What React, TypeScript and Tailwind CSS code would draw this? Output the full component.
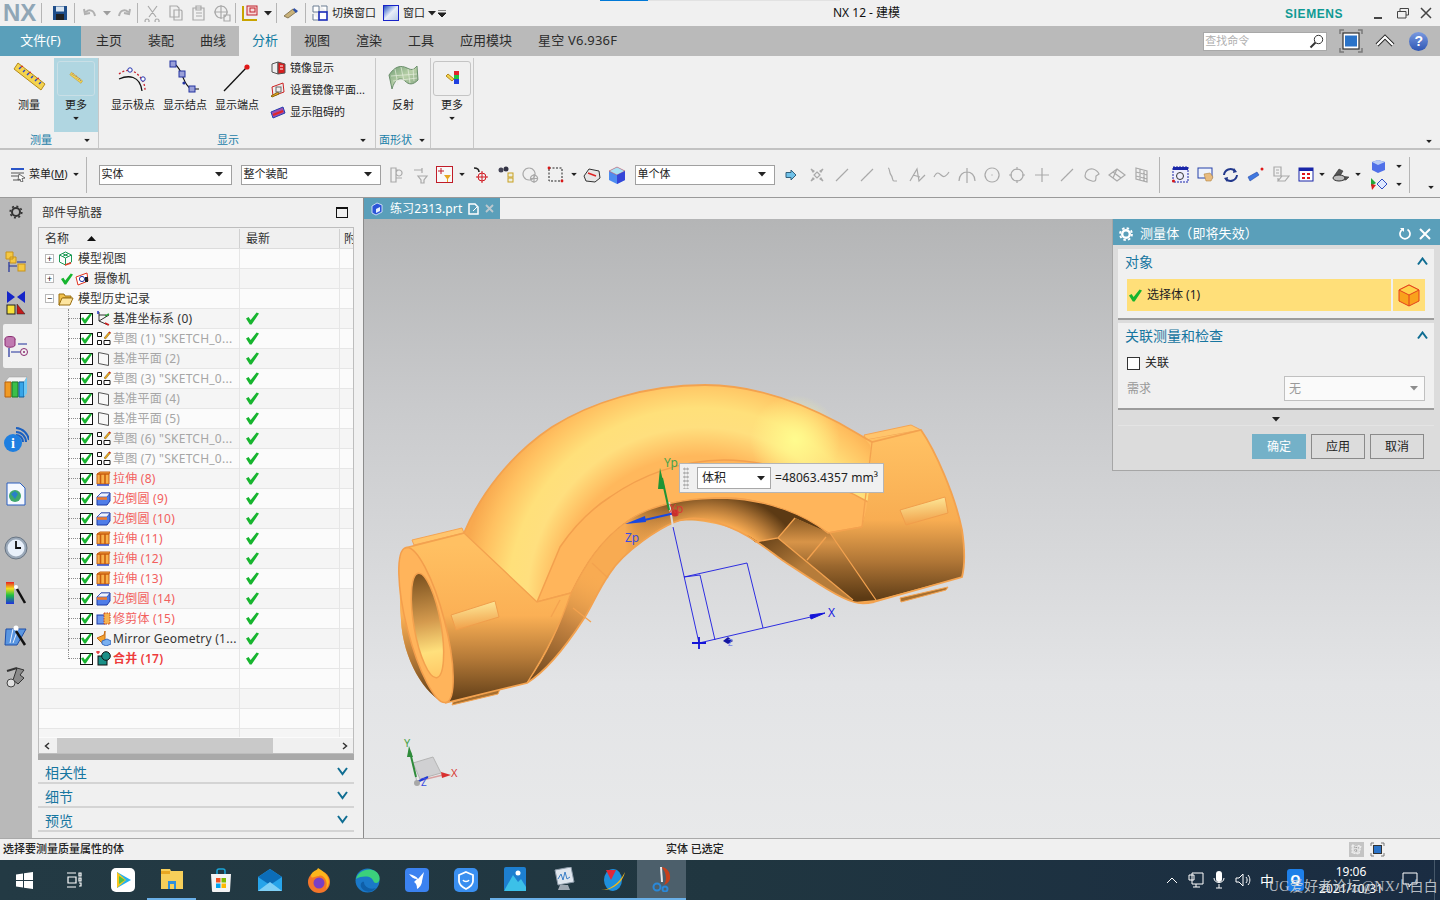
import type { ReactNode } from "react";

const font = "[font-family:'Noto_Sans','Noto_Sans_CJK_SC',sans-serif]";

function Caret({ className = "" }: { className?: string }) {
  return (
    <svg width="8" height="5" viewBox="0 0 8 5" className={className}>
      <path d="M0 0h8L4 4.5z" fill="#222" />
    </svg>
  );
}

function Check({ size = 13 }: { size?: number }) {
  return (
    <svg width={size} height={size} viewBox="0 0 13 13">
      <path d="M0 6.5l2.6-1.4 2 3L10.6.5 13 1.6 5.6 12.5H3.8z" fill="#17b52f" />
    </svg>
  );
}

function Svg({ w = 16, h = 16, children }: { w?: number; h?: number; children: ReactNode }) {
  return (
    <svg width={w} height={h} viewBox={`0 0 ${w} ${h}`} className="shrink-0">
      {children}
    </svg>
  );
}

function Grey({ d }: { d: string }) {
  return (
    <Svg w={18} h={18}>
      <path d={d} fill="none" stroke="#a9a9a9" strokeWidth="1.2" />
    </Svg>
  );
}

const Sep = ({ h = "h-[20px]", m = "mx-[4px]" }: { h?: string; m?: string }) => (
  <div className={`${h} ${m} w-px shrink-0 bg-[#b5b5b5]`} />
);

function TitleBar() {
  return (
    <div className="relative flex h-[26px] shrink-0 items-center bg-[#f0f0f0] pl-[3px]">
      <div className="absolute left-[600px] top-0 h-px w-[48px] bg-[#0078d7]" />
      <div className="absolute left-[648px] top-0 h-px w-[192px] bg-[#e2e2e2]" />
      <span className="w-[34px] text-[24px] font-bold leading-none text-[#8fa6b6] [font-family:'Liberation_Sans',sans-serif]">NX</span>
      <Sep m="ml-[4px] mr-[10px]" />
      <Svg>
        <rect x="1" y="1" width="14" height="14" fill="#1f4e8a" />
        <rect x="4" y="1.5" width="8" height="5" fill="#d8e4f0" />
        <rect x="4" y="9" width="8" height="6" fill="#222" />
      </Svg>
      <Sep m="ml-[6px] mr-[8px]" />
      <div className="flex items-center gap-[6px]">
        <Svg w={14} h={14}>
          <path d="M3 6c3-3 8-2 9 4M1 3l1 5 5-1" fill="none" stroke="#b0b0b0" strokeWidth="2" />
        </Svg>
        <Caret className="opacity-40" />
        <Svg w={14} h={14}>
          <path d="M11 6c-3-3-8-2-9 4M13 3l-1 5-5-1" fill="none" stroke="#b0b0b0" strokeWidth="2" />
        </Svg>
      </div>
      <Sep m="ml-[6px] mr-[6px]" />
      <div className="flex items-center gap-[5px]">
        <Grey d="M4 2l8 11M13 2L5 13M3 15a2 2 0 1 0 .1 0M13 15a2 2 0 1 0 .1 0" />
        <Grey d="M3 2h7l2 2v9H3zM7 6h7l1 1v9H7z" />
        <Grey d="M3 4h11v12H3zM6 2h5v4H6zM6 9h6M6 12h6" />
        <Grey d="M8 2a6 6 0 1 0 .1 0M1 8h14M8 1v14M11 11h6v6h-6z" />
      </div>
      <Sep m="ml-[4px] mr-[6px]" />
      <Svg>
        <path d="M1 1v14h14" fill="none" stroke="#c9a400" strokeWidth="2" />
        <rect x="5" y="1" width="10" height="9" fill="#f7d9d9" stroke="#c0202a" />
        <rect x="8" y="3" width="5" height="4" fill="none" stroke="#c0202a" />
      </Svg>
      <Caret className="ml-[6px]" />
      <Sep m="ml-[4px] mr-[6px]" />
      <Svg>
        <path d="M1 11l9-7 3 3-8 6z" fill="#c9b27a" stroke="#8a7a55" />
        <path d="M11 3l4 3-2 2-3-3z" fill="#2d4fa8" />
      </Svg>
      <Sep m="ml-[6px] mr-[6px]" />
      <Svg>
        <path d="M1 1h6v6H1zM9 1h6v6M1 9v6h6" fill="#fff" stroke="#6b7d92" />
        <rect x="7" y="7" width="8" height="8" fill="#fff" stroke="#1a2bb8" strokeWidth="1.6" />
      </Svg>
      <span className="ml-[4px] w-[44px] whitespace-nowrap">切换窗口</span>
      <div className="ml-[7px] h-[16px] w-[16px] shrink-0 border-[1.5px] border-[#1722c8] bg-gradient-to-br from-[#2a4fc0] via-[#e8eef8] to-[#b9cbe6]" />
      <span className="ml-[4px] w-[22px] whitespace-nowrap">窗口</span>
      <Caret className="ml-[3px]" />
      <svg width="8" height="7" viewBox="0 0 8 7" className="ml-[2px]">
        <path d="M0 0h8M0 3h8L4 7z" stroke="#222" fill="#222" />
      </svg>
      <span className="ml-[387px] w-[74px] whitespace-nowrap text-[12px] text-[#111]">NX 12 - 建模</span>
      <span className="ml-[378px] mt-[2px] w-[62px] text-[12px] font-bold tracking-[0.6px] text-[#0f9a94] [font-family:'Liberation_Sans',sans-serif]">
        SIEMENS
      </span>
      <div className="ml-[27px] flex items-center">
        <div className="mt-[10px] h-[2px] w-[8px] bg-[#444]" />
        <svg width="12" height="11" viewBox="0 0 12 11" className="ml-[15px]">
          <path d="M3 3V.5h8.5V7H9M.5 3.5H9V10H.5z" fill="none" stroke="#444" />
        </svg>
        <svg width="12" height="12" viewBox="0 0 12 12" className="ml-[11px]">
          <path d="M1 1l10 10M11 1L1 11" stroke="#444" strokeWidth="1.5" />
        </svg>
      </div>
    </div>
  );
}

const tabs = ["主页", "装配", "曲线", "分析", "视图", "渲染", "工具"];

function TabBar() {
  return (
    <div className="flex h-[30px] shrink-0 items-center bg-[#bababa] text-[13px] text-[#2c2c2c]">
      <div className="flex h-full w-[81px] items-center justify-center bg-[#5a9fba] text-white">文件(F)</div>
      <div className="ml-[2px] flex h-full">
        {tabs.map((t) =>
          t === "分析" ? (
            <div key={t} className="flex h-full w-[52px] items-center justify-center bg-[#f0f0f0] text-[#0f7ba1]">
              {t}
            </div>
          ) : (
            <div key={t} className="flex h-full w-[52px] items-center justify-center">
              {t}
            </div>
          ),
        )}
      </div>
      <span className="ml-[13px]">应用模块</span>
      <span className="ml-[26px] whitespace-nowrap tracking-[0.2px]">星空 V6.936F</span>
      <div className="ml-[586px] flex h-[19px] w-[124px] items-center justify-between border border-[#a8a8a8] bg-white pl-[1px] pr-[2px] text-[11px] text-[#b0b0b0]">
        查找命令
        <svg width="15" height="15" viewBox="0 0 15 15">
          <circle cx="9.5" cy="5.5" r="4.2" fill="#fff" stroke="#333" />
          <path d="M6.5 8.5L1.5 13.5" stroke="#333" strokeWidth="2" />
        </svg>
      </div>
      <svg width="24" height="24" viewBox="0 0 24 24" className="ml-[12px]">
        <path d="M1 5V1h4M19 1h4v4M23 19v4h-4M5 23H1v-4" fill="none" stroke="#7a7a7a" strokeWidth="1.5" />
        <rect x="4" y="4" width="16" height="16" fill="#fff" stroke="#333" strokeWidth="1.2" />
        <rect x="6" y="6.5" width="12" height="11" fill="#2a73c8" />
      </svg>
      <svg width="20" height="14" viewBox="0 0 20 14" className="ml-[12px]">
        <path d="M2 11l8-8 8 8" fill="none" stroke="#222" strokeWidth="4" />
        <path d="M2 11l8-8 8 8" fill="none" stroke="#fff" strokeWidth="2.2" />
      </svg>
      <div className="ml-[14px] flex h-[19px] w-[19px] items-center justify-center rounded-full bg-gradient-to-b from-[#7a9ae0] to-[#2f56b4] text-[14px] font-bold text-white [font-family:'Liberation_Sans',sans-serif]">
        ?
      </div>
    </div>
  );
}

function RibbonButton({ icon, label, className = "", caret = false }: { icon: ReactNode; label: string; className?: string; caret?: boolean }) {
  return (
    <div className={`flex h-[74px] flex-col items-center ${className}`}>
      <div className="flex h-[38px] w-full items-center justify-center">{icon}</div>
      <span className="mt-[2px] leading-[14px] whitespace-nowrap">{label}</span>
      {caret && <Caret className="mt-[4px] scale-75" />}
    </div>
  );
}

function GroupLabel({ label, className }: { label: string; className: string }) {
  return <div className={`flex h-[16px] items-center text-[#1c80a8] ${className}`}>{label}</div>;
}

const Ruler = ({ s = 34 }: { s?: number }) => (
  <svg width={s} height={s} viewBox="0 0 34 34">
    <path d="M6 3L33 24l-4 6L2 9z" fill="#f4d34e" stroke="#b58a1c" />
    <path d="M7 9l2-2M11 12l2-2M15 15l2-2M19 18l2-2M23 21l2-2M27 24l2-2" stroke="#2b46c8" strokeWidth="1.4" />
    <path d="M9 7l2-1M17 13l2-1M25 19l2-1" stroke="#d22" strokeWidth="1.2" />
  </svg>
);

function Ribbon() {
  return (
    <div className="flex h-[94px] shrink-0 border-b-2 border-[#c2c2c2] bg-[#f0f0f0] pt-[2px]">
      <div className="flex h-[90px] w-[99px] shrink-0 flex-col border-r border-[#c8c8c8]">
        <div className="flex">
          <RibbonButton className="w-[54px] pl-[4px]" label="测量" icon={<Ruler />} />
          <div className="w-[44px] bg-[#b0d6e1]">
            <RibbonButton
              caret
              label="更多"
              icon={
                <div className="mt-[2px] flex h-[35px] w-[38px] items-center justify-center rounded-[3px] border border-[#c9dfe6]">
                  <Ruler s={14} />
                </div>
              }
            />
          </div>
        </div>
        <div className="flex items-center">
          <GroupLabel label="测量" className="pl-[30px]" />
          <Caret className="ml-[31px] scale-75" />
        </div>
      </div>
      <div className="flex w-[277px] shrink-0 flex-col border-r border-[#c8c8c8]">
        <div className="flex h-[74px] pl-[8px]">
          <RibbonButton
            className="w-[52px]"
            label="显示极点"
            icon={
              <svg width="32" height="30" viewBox="0 0 32 30">
                <path d="M2 12C7 8 14 7 19 11s9 10 9 17" fill="none" stroke="#c8202a" strokeWidth="1.3" strokeDasharray="2 2" />
                <path d="M2 17c9-4 21-4 23 12" fill="none" stroke="#111" strokeWidth="1.3" />
                <circle cx="13" cy="8" r="2.2" fill="#fff" stroke="#2233b0" />
                <circle cx="26" cy="17" r="2.2" fill="#fff" stroke="#2233b0" />
              </svg>
            }
          />
          <RibbonButton
            className="w-[52px]"
            label="显示结点"
            icon={
              <svg width="32" height="34" viewBox="0 0 32 34">
                <path d="M4 3c6 3 7 8 9 12s3 10 9 14h8" fill="none" stroke="#111" strokeWidth="1.2" />
                <rect x="1" y="1" width="6" height="6" fill="#9aa0d8" stroke="#2233a0" />
                <rect x="10" y="11" width="6" height="6" fill="#9aa0d8" stroke="#2233a0" />
                <rect x="20" y="26" width="6" height="6" fill="#9aa0d8" stroke="#2233a0" />
                <circle cx="15" cy="23" r="1.6" fill="#2233a0" />
              </svg>
            }
          />
          <RibbonButton
            className="w-[52px]"
            label="显示端点"
            icon={
              <svg width="28" height="30" viewBox="0 0 28 30">
                <path d="M1 29L24 5" stroke="#111" strokeWidth="1.3" />
                <circle cx="24" cy="5" r="2.6" fill="#e01818" />
              </svg>
            }
          />
          <div className="ml-[7px] -mt-[1px] flex flex-col">
            <div className="flex h-[22px] items-center gap-[4px]">
              <svg width="16" height="16" viewBox="0 0 16 16">
                <path d="M2 4l6-2v12l-6-2z" fill="#eee" stroke="#555" />
                <path d="M8 2l7 2v9l-7 1z" fill="#d81e1e" stroke="#555" />
                <path d="M10 6h3M10 9h3" stroke="#fff" />
              </svg>
              镜像显示
            </div>
            <div className="flex h-[22px] items-center gap-[4px] whitespace-nowrap">
              <svg width="16" height="16" viewBox="0 0 16 16">
                <path d="M2 5l11-4 1 9-11 4z" fill="#eee" stroke="#c22" />
                <path d="M1 14l7-4 1 2-7 3z" fill="#e8a820" stroke="#8a6a10" />
                <rect x="6" y="5" width="5" height="5" fill="none" stroke="#666" />
              </svg>
              设置镜像平面...
            </div>
            <div className="flex h-[22px] items-center gap-[4px]">
              <svg width="16" height="16" viewBox="0 0 16 16">
                <path d="M1 8l12-5 2 6-12 5z" fill="#9a4fb0" stroke="#2540b0" />
                <path d="M3 11l10-4" stroke="#e02828" strokeWidth="2" />
              </svg>
              显示阻碍的
            </div>
          </div>
        </div>
        <div className="flex h-[16px] items-center">
          <span className="ml-[118px] text-[#1c80a8]">显示</span>
          <Caret className="ml-[120px] scale-75" />
        </div>
      </div>
      <div className="flex w-[55px] shrink-0 flex-col border-r border-[#c8c8c8]">
        <RibbonButton
          label="反射"
          icon={
            <svg width="32" height="26" viewBox="0 0 32 26">
              <defs>
                <linearGradient id="refl" x1="0" y1="0" x2="1" y2="1">
                  <stop offset="0" stopColor="#6f9c74" />
                  <stop offset=".5" stopColor="#b8d0a8" />
                  <stop offset="1" stopColor="#7ea07c" />
                </linearGradient>
              </defs>
              <path d="M2 11C8 2 14 1 20 4s7 1 10-2l1 14c-5 5-9 5-13 1s-10-3-13 8z" fill="url(#refl)" stroke="#6b8f6c" />
              <path d="M8 5l3 16M14 3l3 14M21 5l2 14M26 4l1 13M4 12l26-2M6 17l24-3" stroke="#e6eede" strokeWidth=".7" />
            </svg>
          }
        />
        <div className="flex h-[16px] items-center pl-[3px]">
          <span className="text-[#1c80a8]">面形状</span>
          <Caret className="ml-[6px] scale-75" />
        </div>
      </div>
      <div className="w-[43px] shrink-0 border-r border-[#c8c8c8] pl-[2px]">
        <div className="w-[38px]">
          <RibbonButton
            caret
            label="更多"
            icon={
              <div className="mt-[2px] flex h-[35px] w-[38px] items-center justify-center rounded-[3px] border border-[#c4c4c4]">
                <svg width="15" height="14" viewBox="0 0 15 14">
                  <path d="M1 5l6 5 2-2-6-5z" fill="#f4d34e" stroke="#b58a1c" />
                  <rect x="9" y="0" width="5" height="4" fill="#e0202c" />
                  <rect x="9" y="4" width="5" height="4" fill="#20c040" />
                  <rect x="9" y="8" width="5" height="5" fill="#2040e0" />
                </svg>
              </div>
            }
          />
        </div>
      </div>
      <div className="flex flex-1 items-end justify-end pb-[4px] pr-[7px]">
        <Caret className="scale-75" />
      </div>
    </div>
  );
}

function Combo({ w, label }: { w: string; label: string }) {
  return (
    <div className={`flex h-[20px] shrink-0 items-center justify-between border border-[#a0a0a0] bg-white pl-[2px] pr-[8px] ${w}`}>
      <span>{label}</span>
      <Caret />
    </div>
  );
}

function Toolbar() {
  return (
    <div className="flex h-[48px] shrink-0 items-center border-b border-[#9a9a9a] bg-[#f0f0f0] pl-[10px] pt-[2px]">
      <svg width="16" height="14" viewBox="0 0 16 14">
        <path d="M1 1h13" stroke="#2a55c8" strokeWidth="2" />
        <path d="M1 5h13M1 8h9M3 12h7" stroke="#555" />
        <path d="M9 6l6 4-3 .5 1 3-2 .5-1-3-2 1z" fill="#fff" stroke="#333" strokeWidth=".7" />
      </svg>
      <span className="ml-[3px]">
        菜单(<span className="underline">M</span>)
      </span>
      <Caret className="ml-[4px] scale-75" />
      <div className="ml-[6px] h-[36px] w-px bg-[#b5b5b5]" />
      <div className="ml-[12px]">
        <Combo w="w-[133px]" label="实体" />
      </div>
      <div className="ml-[9px]">
        <Combo w="w-[140px]" label="整个装配" />
      </div>
      <div className="ml-[7px] flex items-center gap-[6px]">
        <Grey d="M3 2h5v14H3zM8 4h4M11 4a3 3 0 1 0 .1 0M8 12h6" />
        <Grey d="M2 4h8M10 2v5M6 10h9l-3 4v3h-3v-3z" />
        <svg width="17" height="17" viewBox="0 0 17 17" className="shrink-0">
          <rect x=".5" y=".5" width="16" height="16" fill="#f8f8f8" stroke="#c01c28" />
          <path d="M5 2v6M2 5h6" stroke="#c01c28" />
          <path d="M8 9h7l-3 4v3h-1v-3z" fill="#e8a620" />
        </svg>
      </div>
      <Caret className="ml-[5px] scale-75" />
      <div className="ml-[6px] flex items-center gap-[7px]">
        <svg width="18" height="18" viewBox="0 0 18 18" className="shrink-0">
          <path d="M2 2c3 0 5 1 5 4" fill="none" stroke="#222" strokeWidth="1.6" />
          <circle cx="10" cy="11" r="4" fill="none" stroke="#d01820" />
          <path d="M10 5v12M4 11h12" stroke="#d01820" />
        </svg>
        <svg width="18" height="18" viewBox="0 0 18 18" className="shrink-0">
          <circle cx="4" cy="4" r="2.5" fill="#445" />
          <circle cx="9" cy="3" r="2.5" fill="#334" />
          <rect x="11" y="7" width="5" height="4" fill="#eed" stroke="#c8a020" />
          <rect x="11" y="12" width="5" height="4" fill="#eed" stroke="#c8a020" />
        </svg>
        <Grey d="M7 2a6 6 0 1 0 .1 0M12 9a3.5 3.5 0 1 0 .1 0M12 8v9M8 12.5h8" />
        <svg width="17" height="17" viewBox="0 0 17 17" className="shrink-0">
          <rect x="2" y="2" width="13" height="13" fill="none" stroke="#222" strokeDasharray="2 1.5" />
          <circle cx="2" cy="2" r="1.4" fill="#d81818" />
          <circle cx="15" cy="15" r="1.4" fill="#d81818" />
        </svg>
      </div>
      <Caret className="ml-[6px] scale-75" />
      <div className="ml-[5px] flex items-center gap-[7px]">
        <svg width="18" height="16" viewBox="0 0 18 16" className="shrink-0">
          <path d="M1 9l5-7 10 2 1 7-5 4-9-1z" fill="#e6e6e6" stroke="#333" />
          <path d="M5 6l8 3" stroke="#d22" strokeWidth="1.4" />
        </svg>
        <svg width="18" height="18" viewBox="0 0 18 18" className="shrink-0">
          <path d="M1 5l8-4 8 4v9l-8 4-8-4z" fill="#4d8cf0" />
          <path d="M1 5l8 4 8-4-8-4z" fill="#a7e2f4" stroke="#d44" strokeWidth=".5" />
          <path d="M9 9v9l8-4V5z" fill="#3546d8" />
        </svg>
      </div>
      <div className="ml-[9px]">
        <Combo w="w-[140px]" label="单个体" />
      </div>
      <svg width="12" height="12" viewBox="0 0 12 12" className="ml-[10px] shrink-0">
        <path d="M1 3.500h5V1l5 5-5 5V8.500H1z" fill="#6fc1e8" stroke="#33617c" />
      </svg>
      <div className="ml-[11px] flex items-center gap-[7px]">
        <Grey d="M9 6l3 3-3 3-3-3zM3 3l3 2-1 1zM15 3l-3 2 1 1zM3 15l3-2-1-1zM15 15l-3-2 1-1z" />
        <Grey d="M3 15L15 3M9 9h.1" />
        <Grey d="M3 15L15 3M8 10l2-2" />
        <Grey d="M5 2c2 0 1 5 3 7s1 6 3 6h3" />
        <Grey d="M2 15L9 3l2 12 6-6M5 9l7 2" />
        <Grey d="M1 11c3-6 5-4 7-2s4 3 8-3" />
        <Grey d="M1 15c0-6 4-9 8-9s8 3 8 9M9 2v15" />
        <Grey d="M9 2a7 7 0 1 0 .1 0M9 8.500v1" />
        <Grey d="M9 3a6 6 0 1 0 .1 0M9 1v3M9 14v3M1 9h3M14 9h3" />
        <Grey d="M9 2v14M2 9h14" />
        <Grey d="M3 15L15 3M8 10l2-2" />
        <Grey d="M2 10c0-5 4-8 8-7 3 1 5 2 6 5l-3 2c0 4 0 6-4 5s-7-2-7-5z" />
        <Grey d="M1 9l8-6 8 6-8 6zM5 6l8 6M9 3l-4 9" />
        <Grey d="M3 2l11 3v11L3 13zM7 3v11M11 4v11M3 6l11 3M3 10l11 3" />
      </div>
      <div className="ml-[8px] h-[36px] w-px bg-[#b5b5b5]" />
      <div className="ml-[12px] flex items-center gap-[8px]">
        <svg width="17" height="17" viewBox="0 0 17 17" className="shrink-0">
          <rect x="1" y="1" width="15" height="15" fill="#eef" stroke="#1825a8" strokeDasharray="2 1" />
          <rect x="1" y="1" width="15" height="3" fill="#1825a8" />
          <circle cx="8" cy="10" r="3.500" fill="none" stroke="#333" />
          <circle cx="1.500" cy="15" r="1.500" fill="#d81818" />
        </svg>
        <svg width="17" height="15" viewBox="0 0 17 15" className="shrink-0">
          <rect x="1" y="1" width="14" height="10" fill="#eef2fb" stroke="#2540a8" />
          <path d="M7 7l6-1 3 4-2 4h-5z" fill="#e8bc80" stroke="#a8762c" strokeWidth=".5" />
        </svg>
        <svg width="17" height="16" viewBox="0 0 17 16" className="shrink-0">
          <path d="M2 8a6.500 6.500 0 0 1 11-4M15 8a6.500 6.500 0 0 1-11 4" fill="none" stroke="#23398c" strokeWidth="2" />
          <path d="M12 1l3 4-4 1zM5 15l-3-4 4-1z" fill="#23398c" />
        </svg>
        <svg width="17" height="16" viewBox="0 0 17 16" className="shrink-0">
          <path d="M1 10l9-5 2 3-9 6z" fill="#3f78e0" stroke="#1b3a9a" strokeWidth=".5" />
          <circle cx="15" cy="2" r="1.500" fill="#e01818" />
        </svg>
        <Grey d="M2 1h7v9H2zM4 4h3M4 7h3M6 15l4-5h7l-4 5zM6 15v-3" />
        <svg width="17" height="15" viewBox="0 0 17 15" className="shrink-0">
          <rect x="1" y="1" width="14" height="13" fill="#fff" stroke="#1825a8" />
          <rect x="1" y="1" width="14" height="3" fill="#1825a8" />
          <path d="M4 6h3v2H4zM9 6h3v2H9zM4 10h3v2H4zM9 10h3v2H9z" fill="#e01818" />
        </svg>
      </div>
      <Caret className="ml-[3px] scale-75" />
      <svg width="18" height="14" viewBox="0 0 18 14" className="ml-[6px] shrink-0">
        <path d="M2 8l5-7 4 2-3 5 9 1-3 3H3z" fill="#555" stroke="#222" strokeWidth=".5" />
        <ellipse cx="7" cy="10" rx="6" ry="3" fill="#bcbcbc" stroke="#333" />
      </svg>
      <Caret className="ml-[4px] scale-75" />
      <div className="ml-[9px] flex flex-col gap-[5px]">
        <div className="flex items-center gap-[9px]">
          <svg width="15" height="14" viewBox="0 0 15 14">
            <path d="M1 3l6-2 7 2v8l-7 3-6-3z" fill="#5070e8" />
            <path d="M1 3l6 3 7-3-7-2z" fill="#b8ccf6" />
          </svg>
          <Caret className="scale-75" />
        </div>
        <div className="flex items-center gap-[8px]">
          <svg width="16" height="12" viewBox="0 0 16 12">
            <path d="M0 0l5 5-5 3z" fill="#21a838" />
            <path d="M0 6l5 1-4 5z" fill="#d82020" />
            <path d="M6 6l5-5 5 5-5 5z" fill="#dfe8ff" stroke="#2b4cc4" />
          </svg>
          <Caret className="scale-75" />
        </div>
      </div>
      <div className="ml-[6px] h-[36px] w-px bg-[#b5b5b5]" />
      <Caret className="ml-[17px] mt-[26px] scale-75" />
    </div>
  );
}

const railIcons: { h: string; node: ReactNode; active?: boolean }[] = [
  {
    h: "h-[28px] mb-[14px]",
    node: (
      <svg width="14" height="14" viewBox="0 0 14 14">
        <circle cx="7" cy="7" r="4" fill="none" stroke="#333" strokeWidth="2" />
        <circle cx="7" cy="7" r="5.800" fill="none" stroke="#333" strokeWidth="1.600" strokeDasharray="2 2.500" />
      </svg>
    ),
  },
  {
    h: "h-[42px]",
    node: (
      <svg width="22" height="24" viewBox="0 0 22 24">
        <path d="M1 3h7v7H1zM5 8h6v6H5z" fill="#f5c842" stroke="#c8941c" />
        <path d="M4 13v10M4 17h8M12 13h9" stroke="#1f2f9a" strokeWidth="1.200" />
        <rect x="13" y="15" width="7" height="7" fill="#f5c842" stroke="#c8941c" />
      </svg>
    ),
  },
  {
    h: "h-[42px]",
    node: (
      <svg width="20" height="24" viewBox="0 0 20 24">
        <path d="M1 0l8 6-8 6zM19 0l-8 6 8 6z" fill="#1525c8" />
        <rect x="1" y="14" width="8" height="9" fill="#f8e23a" stroke="#222" />
        <path d="M11 23V13l8 10z" fill="#c41a1a" stroke="#222" strokeWidth=".5" />
      </svg>
    ),
  },
  {
    h: "h-[44px]",
    active: true,
    node: (
      <svg width="24" height="24" viewBox="0 0 24 24">
        <ellipse cx="6" cy="5" rx="5" ry="2.500" fill="#c07ab0" stroke="#8a2a70" />
        <path d="M1 5v6c0 3 10 3 10 0V5" fill="#c07ab0" stroke="#8a2a70" />
        <path d="M7 18h9M5 14v9M14 10h9" stroke="#1f2f9a" strokeWidth="1.200" />
        <circle cx="20" cy="18" r="3.500" fill="none" stroke="#8a2a70" />
        <circle cx="20" cy="18" r="1" fill="#8a2a70" />
      </svg>
    ),
  },
  {
    h: "h-[38px]",
    node: (
      <svg width="24" height="22" viewBox="0 0 24 22">
        <path d="M5 1h18l-3 5H1z" fill="#f4f4f4" stroke="#9a9a9a" strokeWidth=".5" />
        <path d="M1 6h6v15H1z" fill="#f09a24" stroke="#b8600c" />
        <path d="M8 6h6v15H8z" fill="#3bbf4a" stroke="#1a7a24" />
        <path d="M15 6h5v15h-5z" fill="#37a5e8" stroke="#125e9a" />
        <path d="M20 21l3-4V1l-3 5z" fill="#6ec8f4" />
      </svg>
    ),
  },
  {
    h: "h-[48px] mt-[10px]",
    node: (
      <svg width="26" height="26" viewBox="0 0 26 26">
        <path d="M13 5a10 10 0 0 1 10 10M13 1a14 14 0 0 1 13 12M13 8a7 7 0 0 1 7 7" fill="none" stroke="#1b60c0" strokeWidth="2" />
        <circle cx="10" cy="16" r="9" fill="#1e7fe0" />
        <text x="10" y="21" textAnchor="middle" fontSize="14" fontWeight="bold" fill="#fff" fontFamily="Liberation Serif">i</text>
      </svg>
    ),
  },
  {
    h: "h-[60px]",
    node: (
      <svg width="20" height="24" viewBox="0 0 20 24">
        <path d="M1 1h13l5 5v17H1z" fill="#f4f8ff" stroke="#2a5fc0" />
        <circle cx="9" cy="14" r="6" fill="#3fa86c" />
        <path d="M5 12l4-3 3 3-3 5z" fill="#2980c8" />
      </svg>
    ),
  },
  {
    h: "h-[48px]",
    node: (
      <svg width="24" height="24" viewBox="0 0 24 24">
        <circle cx="12" cy="12" r="11" fill="#9aa8b8" stroke="#6a7684" />
        <circle cx="12" cy="12" r="8.500" fill="#e8f0fa" />
        <path d="M12 5v7h5" fill="none" stroke="#111" strokeWidth="1.800" />
      </svg>
    ),
  },
  {
    h: "h-[42px]",
    node: (
      <svg width="22" height="24" viewBox="0 0 22 24">
        <defs>
          <linearGradient id="rb" x1="0" y1="0" x2="0" y2="1">
            <stop offset="0" stopColor="#e82020" />
            <stop offset=".3" stopColor="#f0e020" />
            <stop offset=".6" stopColor="#20c040" />
            <stop offset="1" stopColor="#2030e0" />
          </linearGradient>
        </defs>
        <rect x="1" y="1" width="8" height="22" fill="url(#rb)" />
        <path d="M12 8l8 14" stroke="#111" strokeWidth="2.500" />
        <circle cx="11" cy="6" r="2" fill="#fff" />
      </svg>
    ),
  },
  {
    h: "h-[42px]",
    node: (
      <svg width="24" height="24" viewBox="0 0 24 24">
        <path d="M2 6h20l-9 16H1z" fill="#5a96e0" stroke="#1f4fa8" />
        <path d="M9 6l-3 14M14 6L9 20" stroke="#e8f0ff" />
        <path d="M12 8l9 14" stroke="#111" strokeWidth="2.500" />
        <circle cx="12" cy="5" r="2.500" fill="#fff" />
      </svg>
    ),
  },
  {
    h: "h-[42px]",
    node: (
      <svg width="22" height="24" viewBox="0 0 22 24">
        <path d="M12 3l7 2-4 5 4 3-6 6-5-4z" fill="#8a8a8a" stroke="#333" />
        <circle cx="6" cy="18" r="4" fill="#e0e0e0" stroke="#444" />
        <path d="M2 6l10-3" stroke="#333" strokeWidth="2" />
      </svg>
    ),
  },
];

function Rail() {
  return (
    <div className="flex w-[32px] shrink-0 flex-col bg-[#b9b9b9] pl-[3px]">
      {railIcons.map((r, i) => (
        <div
          key={i}
          className={`flex items-center justify-center rounded-l-[2px] pr-[3px] ${r.h} ${r.active ? "bg-[#f0f0f0]" : ""}`}
        >
          {r.node}
        </div>
      ))}
    </div>
  );
}

type Kind = "datum" | "sketch" | "plane" | "extrude" | "blend" | "trim" | "mirror" | "merge";

const Tree: Record<Kind, ReactNode> = {
  datum: (
    <Svg w={15} h={15}>
      <path d="M3 1v9l9 4M3 10l10-6M3 4h7" fill="none" stroke="#333" />
      <path d="M9 5l4-2" stroke="#29a03a" strokeWidth="1.500" />
      <path d="M2 0v3" stroke="#2233c0" strokeWidth="1.500" />
      <path d="M9 12l4 2" stroke="#d02020" strokeWidth="1.500" />
    </Svg>
  ),
  sketch: (
    <Svg w={15} h={15}>
      <path d="M1.500 1.500h4v4h-4zM1.500 9.500h4v4h-4zM8 9.500h6v4H8z" fill="#fff" stroke="#111" />
      <path d="M8 7l5-6 1.500 1-5 6z" fill="#e8a820" stroke="#7a5a10" strokeWidth=".5" />
      <path d="M13 1l1.500 1" stroke="#d22" strokeWidth="1.500" />
    </Svg>
  ),
  plane: (
    <Svg w={15} h={15}>
      <path d="M2.500 1.500l10 2v11l-10-2z" fill="#f8f8f8" stroke="#555" />
    </Svg>
  ),
  extrude: (
    <Svg w={15} h={15}>
      <path d="M1 3l3-2h10l-1 2zM1 3h12v10H1z" fill="#f8b04a" stroke="#c85c10" />
      <path d="M4.500 3v10M9 3v10" stroke="#c85c10" strokeWidth="1.600" />
      <path d="M1 14h12" stroke="#2040c8" strokeWidth="1.400" />
    </Svg>
  ),
  blend: (
    <Svg w={15} h={15}>
      <path d="M1 6l4-4h9v8l-3 4H1z" fill="#4f7de8" stroke="#1c3aa8" />
      <path d="M1 6h10l3-4H5z" fill="#eef3ff" stroke="#1c3aa8" strokeWidth=".7" />
      <path d="M1 7.500h10" stroke="#f0782a" strokeWidth="2.500" />
    </Svg>
  ),
  trim: (
    <Svg w={15} h={15}>
      <rect x="1" y="4" width="8" height="9" fill="#6e98ec" stroke="#1c3aa8" />
      <rect x="8" y="2" width="6" height="11" fill="#f6b450" stroke="#c8401c" strokeDasharray="1.500 1" />
    </Svg>
  ),
  mirror: (
    <Svg w={15} h={15}>
      <path d="M1 7l7-3 1-4v11l-3 1z" fill="#f3a330" stroke="#c86a10" />
      <path d="M6 10l5-2 4 2v3l-5 2-4-2z" fill="#7ab0f0" stroke="#3a6cc0" />
    </Svg>
  ),
  merge: (
    <Svg w={15} h={15}>
      <path d="M0 1h4M2-1v4" stroke="#e01818" strokeWidth="1.200" />
      <rect x="2" y="5" width="9" height="9" fill="#1a9088" stroke="#111" />
      <circle cx="10" cy="5" r="4.300" fill="#1a9088" stroke="#111" />
    </Svg>
  ),
};

const rows: { kind: Kind; label: string; tone: string }[] = [
  { kind: "datum", label: "基准坐标系 (0)", tone: "text-[#333]" },
  { kind: "sketch", label: '草图 (1) "SKETCH_0...', tone: "text-[#a6a6a6]" },
  { kind: "plane", label: "基准平面 (2)", tone: "text-[#a6a6a6]" },
  { kind: "sketch", label: '草图 (3) "SKETCH_0...', tone: "text-[#a6a6a6]" },
  { kind: "plane", label: "基准平面 (4)", tone: "text-[#a6a6a6]" },
  { kind: "plane", label: "基准平面 (5)", tone: "text-[#a6a6a6]" },
  { kind: "sketch", label: '草图 (6) "SKETCH_0...', tone: "text-[#a6a6a6]" },
  { kind: "sketch", label: '草图 (7) "SKETCH_0...', tone: "text-[#a6a6a6]" },
  { kind: "extrude", label: "拉伸 (8)", tone: "text-[#f2605e]" },
  { kind: "blend", label: "边倒圆 (9)", tone: "text-[#f2605e]" },
  { kind: "blend", label: "边倒圆 (10)", tone: "text-[#f2605e]" },
  { kind: "extrude", label: "拉伸 (11)", tone: "text-[#f2605e]" },
  { kind: "extrude", label: "拉伸 (12)", tone: "text-[#f2605e]" },
  { kind: "extrude", label: "拉伸 (13)", tone: "text-[#f2605e]" },
  { kind: "blend", label: "边倒圆 (14)", tone: "text-[#f2605e]" },
  { kind: "trim", label: "修剪体 (15)", tone: "text-[#f2605e]" },
  { kind: "mirror", label: "Mirror Geometry (1...", tone: "text-[#333]" },
  { kind: "merge", label: "合并 (17)", tone: "text-[#ee3b3b] font-semibold" },
];

function RowShell({ index, first, second }: { index: number; first?: ReactNode; second?: ReactNode }) {
  return (
    <div className={`grid h-[20px] shrink-0 grid-cols-[201px_100px_1fr] border-b border-[#e6e6e6] ${index % 2 ? "bg-[#f5f5f5]" : "bg-[#fbfbfb]"}`}>
      <div className="flex h-[19px] items-center overflow-hidden border-r border-[#e6e6e6]">{first}</div>
      <div className="flex h-[19px] items-center border-r border-[#e6e6e6] pl-[6px]">{second}</div>
      <div />
    </div>
  );
}

function Expander({ sign }: { sign: string }) {
  return (
    <div className="ml-[6px] flex h-[9px] w-[9px] shrink-0 items-center justify-center border border-[#b8b8b8] bg-white text-[9px] leading-none text-[#111]">
      {sign}
    </div>
  );
}

function Navigator() {
  return (
    <div className="flex w-[332px] shrink-0 flex-col border-r border-[#8c8c8c] bg-[#f0f0f0] pl-[6px] pr-[9px]">
      <div className="flex h-[29px] shrink-0 items-center justify-between pl-[4px] pr-[6px] text-[12px] text-[#333]">
        部件导航器
        <div className="h-[11px] w-[12px] border border-t-2 border-[#111]" />
      </div>
      <div className="flex h-[527px] shrink-0 flex-col overflow-hidden border border-[#bdbdbd] bg-[#fbfbfb] text-[12px]">
        <div className="grid h-[21px] shrink-0 grid-cols-[201px_100px_1fr] border-b border-[#dcdcdc] bg-[#f0f0f0] pt-[1px] text-[#333]">
          <div className="flex items-center border-r border-[#d0d0d0] pl-[6px]">
            名称
            <svg width="9" height="5" viewBox="0 0 9 5" className="ml-[18px]">
              <path d="M0 5h9L4.500 0z" fill="#111" />
            </svg>
          </div>
          <div className="flex items-center border-r border-[#d0d0d0] pl-[6px]">最新</div>
          <div className="flex items-center overflow-hidden pl-[4px]">附</div>
        </div>
        <div className="flex min-h-0 flex-1 flex-col overflow-hidden">
          <RowShell
            index={0}
            first={
              <>
                <Expander sign="+" />
                <svg width="15" height="15" viewBox="0 0 15 15" className="ml-[4px] shrink-0">
                  <path d="M7.500 1l6 3v7l-6 3-6-3V4zM1.500 4l6 3 6-3M7.500 7v7M4.500 2.500l6 3M10.500 2.500l-6 3" fill="none" stroke="#1a9a55" />
                  <path d="M7 14l6-2" stroke="#e0402a" strokeWidth="1.400" />
                </svg>
                <span className="ml-[5px] text-[#333]">模型视图</span>
              </>
            }
          />
          <RowShell
            index={1}
            first={
              <>
                <Expander sign="+" />
                <div className="ml-[7px]">
                  <Check size={12} />
                </div>
                <svg width="15" height="14" viewBox="0 0 15 14" className="ml-[2px] shrink-0">
                  <path d="M1 5l11-4 1 8-10 4z" fill="#fff" stroke="#e0301c" />
                  <circle cx="7" cy="7" r="2.600" fill="none" stroke="#2233a8" />
                  <path d="M10 5v5h3V5z" fill="#222" />
                </svg>
                <span className="ml-[4px] text-[#333]">摄像机</span>
              </>
            }
          />
          <RowShell
            index={0}
            first={
              <>
                <Expander sign="−" />
                <svg width="16" height="14" viewBox="0 0 16 14" className="ml-[4px] shrink-0">
                  <path d="M1 2h5l1 2h6v2H5l-3 7H1z" fill="#f2c24c" stroke="#9a6f10" />
                  <path d="M4 6h11l-3 7H1z" fill="#fde5a0" stroke="#9a6f10" />
                </svg>
                <span className="ml-[4px] text-[#333]">模型历史记录</span>
              </>
            }
          />
          {rows.map((r, i) => (
            <RowShell
              key={r.label}
              index={i + 1}
              first={
                <>
                  <div className="ml-[29px] flex h-[20px] w-[12px] shrink-0 flex-col">
                    <div className="h-[10px] border-b border-l border-dotted border-[#8c8c8c]" />
                    {i < rows.length - 1 && <div className="h-[10px] border-l border-dotted border-[#8c8c8c]" />}
                  </div>
                  <div className="flex h-[12px] w-[13px] shrink-0 items-center justify-center border border-[#111] bg-white">
                    <Check size={11} />
                  </div>
                  <div className="ml-[3px]">{Tree[r.kind]}</div>
                  <span className={`ml-[2px] whitespace-nowrap tracking-[0.25px] ${r.tone}`}>{r.label}</span>
                </>
              }
              second={<Check />}
            />
          ))}
          <RowShell index={0} />
          <RowShell index={1} />
          <RowShell index={0} />
          <RowShell index={1} />
        </div>
        <div className="flex h-[16px] shrink-0 items-center border-t border-[#fbfbfb] bg-[#f0f0f0] px-[5px]">
          <svg width="6" height="8" viewBox="0 0 6 8">
            <path d="M5 1L1.500 4 5 7" fill="none" stroke="#333" strokeWidth="1.500" />
          </svg>
          <div className="ml-[7px] h-full w-[216px] bg-[#c9c9c9]" />
          <svg width="6" height="8" viewBox="0 0 6 8" className="ml-auto">
            <path d="M1 1l3.500 3L1 7" fill="none" stroke="#333" strokeWidth="1.500" />
          </svg>
        </div>
      </div>
      <div className="h-[6px] shrink-0 border-b-[4px] border-t border-[#a9a9a9] bg-[#a9a9a9]" />
      {["相关性", "细节", "预览"].map((t) => (
        <div key={t} className="flex h-[24px] shrink-0 items-center justify-between border-b-2 border-[#d4d4d4] pl-[7px] pr-[6px] pt-[2px] text-[14px] text-[#1776a0]">
          {t}
          <svg width="11" height="9" viewBox="0 0 11 9" className="-mt-[1px]">
            <path d="M1 1l4.500 6L10 1" fill="none" stroke="#0f6d92" strokeWidth="2" />
          </svg>
        </div>
      ))}
    </div>
  );
}

function Model() {
  const body =
    "M405 548L464 533C480 495 510 455 552 427C590 403 645 385 705 385C755 385 800 402 839 423L872 442L921 430C935 450 955 495 962 530C965 550 965 565 962 577L874 602C865 604 860 604 854 602C838 598 805 575 782 560C765 548 745 530 709 520C695 517 685 518 675 522C660 528 625 550 610 573C598 590 590 610 583 620C570 640 548 670 527 683L445 703C425 695 403 660 401 620C399 590 399 560 405 548Z";
  return (
    <svg viewBox="364 219 1076 619" width="1076" height="619" className="absolute left-0 top-0">
      <defs>
        <linearGradient id="coll" x1="0" y1="545" x2="0" y2="702" gradientUnits="userSpaceOnUse">
          <stop offset="0" stopColor="#ffc062" />
          <stop offset=".45" stopColor="#fbb055" />
          <stop offset=".72" stopColor="#b57a38" />
          <stop offset="1" stopColor="#5f3d17" />
        </linearGradient>
        <linearGradient id="collr" x1="0" y1="440" x2="0" y2="600" gradientUnits="userSpaceOnUse">
          <stop offset="0" stopColor="#ffc062" />
          <stop offset=".5" stopColor="#f8ad52" />
          <stop offset=".76" stopColor="#b07636" />
          <stop offset="1" stopColor="#5f3d17" />
        </linearGradient>
        <radialGradient id="tube" cx="700" cy="600" r="240" gradientUnits="userSpaceOnUse">
          <stop offset=".6" stopColor="#ffb85c" />
          <stop offset=".72" stopColor="#ffdf7e" />
          <stop offset=".8" stopColor="#ffe07a" />
          <stop offset=".92" stopColor="#ffc060" />
          <stop offset="1" stopColor="#f8a94f" />
        </radialGradient>
        <radialGradient id="glow" cx="795" cy="440" r="45" gradientUnits="userSpaceOnUse">
          <stop offset="0" stopColor="#ffff90" stopOpacity=".9" />
          <stop offset="1" stopColor="#ffff90" stopOpacity="0" />
        </radialGradient>
        <radialGradient id="under" cx="705" cy="600" r="120" gradientUnits="userSpaceOnUse">
          <stop offset=".65" stopColor="#f8ab52" />
          <stop offset=".78" stopColor="#b07636" />
          <stop offset=".92" stopColor="#5c3a14" />
          <stop offset="1" stopColor="#5c3a14" />
        </radialGradient>
        <linearGradient id="fade" x1="668" y1="0" x2="625" y2="0" gradientUnits="userSpaceOnUse">
          <stop offset="0" stopColor="#f8ab52" stopOpacity="0" />
          <stop offset="1" stopColor="#f8ab52" />
        </linearGradient>
        <linearGradient id="underL" x1="590" y1="570" x2="530" y2="688" gradientUnits="userSpaceOnUse">
          <stop offset="0" stopColor="#f9ad54" stopOpacity="0" />
          <stop offset=".45" stopColor="#c48340" />
          <stop offset="1" stopColor="#64401a" />
        </linearGradient>
        <linearGradient id="r1" x1="0" y1="518" x2="0" y2="598" gradientUnits="userSpaceOnUse">
          <stop offset="0" stopColor="#8a5a24" />
          <stop offset=".3" stopColor="#d89448" />
          <stop offset=".6" stopColor="#9a672e" />
          <stop offset="1" stopColor="#5c3a14" />
        </linearGradient>
        <linearGradient id="r2" x1="760" y1="530" x2="790" y2="575" gradientUnits="userSpaceOnUse">
          <stop offset="0" stopColor="#5c3a14" />
          <stop offset="1" stopColor="#b67c3a" />
        </linearGradient>
        <linearGradient id="key" x1="0" y1="0" x2="0.15" y2="1">
          <stop offset="0" stopColor="#fff0a0" />
          <stop offset="1" stopColor="#f0a04a" />
        </linearGradient>
        <linearGradient id="hole" x1="0" y1="575" x2="0" y2="678" gradientUnits="userSpaceOnUse">
          <stop offset="0" stopColor="#7d5320" />
          <stop offset=".45" stopColor="#d49a4e" />
          <stop offset=".75" stopColor="#ffe07c" />
          <stop offset="1" stopColor="#ffc866" />
        </linearGradient>
      </defs>
      <path d="M414 545L412 540L462 528L464 533Z" fill="#ffc56c" stroke="#f5a452" />
      <path d="M866 440L864 435L911 425L921 430Z" fill="#ffc56c" stroke="#f5a452" />
      <path d="M453 702L452 705L498 694L500 689Z" fill="#a87030" stroke="#f5a452" />
      <path d="M900 598L901 602L946 590L948 587Z" fill="#a87030" stroke="#f5a452" />
      <path d={body} fill="#f5a850" />
      <path d="M464 533C480 495 510 455 552 427C590 403 645 385 705 385C755 385 800 402 839 423L872 442C874 452 872 490 862 527L828 533C815 520 760 497 724 498C680 498 640 510 610 545C590 565 580 580 571 593L537 602Z" fill="url(#tube)" />
      <path d="M740 395h110v70h-110z" fill="url(#glow)" />
      <path d="M537 602L560 547C575 525 590 510 610 497C640 476 680 460 724 460C770 460 830 480 870 503L862 527L828 533C810 520 765 497 724 498C680 498 640 512 610 545C590 565 580 580 571 593Z" fill="#ffb55b" stroke="#f3a04e" strokeWidth="1.500" />
      <path d="M405 548L464 533L537 602L571 593C560 625 545 655 527 683L445 703C425 695 403 660 401 620C399 590 399 560 405 548Z" fill="url(#coll)" />
      <path d="M571 593C585 565 600 540 629 520C650 506 680 498 724 498C770 500 805 515 828 533L795 518L778 538L755 542L747 535C730 526 695 517 675 522C660 528 625 550 610 573C598 590 590 610 583 620C570 640 548 670 527 683C548 655 560 625 571 593Z" fill="url(#under)" />
      <path d="M571 593C585 565 600 540 629 520C640 512 655 506 670 502L675 522C660 528 625 550 610 573C598 590 590 610 583 620C570 640 548 670 527 683C548 655 560 625 571 593Z" fill="url(#fade)" />
      <path d="M571 593C585 565 595 552 605 545L610 573C598 590 590 610 583 620C570 640 548 670 527 683C548 655 560 625 571 593Z" fill="url(#underL)" />
      <path d="M795 518L830 533L876 600L854 602L778 538Z" fill="url(#r1)" />
      <path d="M747 535L755 542L778 538L853 601C838 598 805 575 782 560C770 551 760 542 747 535Z" fill="url(#r2)" />
      <path d="M866 440L921 430C935 450 955 495 962 530C965 550 965 565 962 577L876 600C865 585 845 555 830 533L862 527C870 500 872 465 870 445Z" fill="url(#collr)" />
      <ellipse cx="426" cy="625" rx="19" ry="80" transform="rotate(-14.500 426 625)" fill="#ffb45b" stroke="#f39e4c" strokeWidth="1.500" />
      <ellipse cx="427.500" cy="625.500" rx="13.500" ry="53" transform="rotate(-10 427.500 625.500)" fill="url(#hole)" stroke="#f3a14e" strokeWidth="1.500" />
      <path d="M451 615L495 601L499 617L456 630Z" fill="url(#key)" stroke="#f09e4c" />
      <path d="M900 510L945 497L948 513L906 525Z" fill="url(#key)" stroke="#f09e4c" />
      <g fill="none" stroke="#f3a24f" strokeWidth="1.300">
        <path d="M405 548L464 533C480 495 510 455 552 427C590 403 645 385 705 385C755 385 800 402 839 423L872 442L921 430C935 450 955 495 962 530C965 550 965 565 962 577L874 602C865 604 860 604 854 602C838 598 805 575 782 560C765 548 745 530 709 520C695 517 685 518 675 522C660 528 625 550 610 573C598 590 590 610 583 620C570 640 548 670 527 683L445 703" strokeWidth="1.800" />
        <path d="M464 533L537 602L571 593" />
        <path d="M560 600L551 617" />
        <path d="M573 608L591 622" />
        <path d="M592 563L608 578" />
        <path d="M571 593C560 625 548 650 527 683" />
        <path d="M755 542L778 538L795 518" />
        <path d="M778 538L853 600" />
        <path d="M807 560L826 537" />
        <path d="M830 533L876 600" />
        <path d="M862 527L872 442" />
        <path d="M571 593C585 565 600 540 629 520C650 506 680 498 724 498C770 500 805 515 828 533L862 527" />
      </g>
      <path d="M673 527L699 643M684 577L747 563L763 628M684 577L700 575L715 640M699 643L815 616" fill="none" stroke="#1a1ae0" strokeWidth=".9" />
      <path d="M810 615L825 613L811 619Z" fill="#1414d8" stroke="#1414d8" />
      <path d="M699 637v12M692 643h14" stroke="#1414d8" strokeWidth="1.800" />
      <path d="M723 641l5-4 5 4-5 3z" fill="#1414a0" />
      <text x="728" y="646" fontSize="8" fill="#7a86e8" fontFamily="Noto Sans">Z</text>
      <text x="828" y="617" fontSize="12" fill="#1a1ae0" fontFamily="Noto Sans">X</text>
      <path d="M669 502L673 527" stroke="#ddd" strokeWidth="2" />
      <path d="M669 510L662 478" stroke="#1e9434" strokeWidth="2" />
      <path d="M660 468L665 489L658 489Z" fill="#1e9434" />
      <path d="M675 513L640 521" stroke="#1848e0" strokeWidth="2" />
      <path d="M625 524L645 516L646 522Z" fill="#1848e0" />
      <circle cx="675" cy="513" r="3.500" fill="#c9302c" />
      <text x="664" y="467" fontSize="12" fill="#4aa34a" fontFamily="Noto Sans">Yp</text>
      <text x="669" y="513" fontSize="12" fill="#d83a34" fontFamily="Noto Sans">Xp</text>
      <text x="625" y="542" fontSize="12" fill="#3a4ce0" fontFamily="Noto Sans">Zp</text>
      <g>
        <path d="M413 763L433 757L441 773L420 779Z" fill="#d0d0d2" stroke="#b4b4b4" />
        <path d="M413 763L417 783" stroke="#b4b4b4" />
        <path d="M416 777L410 752" stroke="#2e8b3a" strokeWidth="2" />
        <path d="M409 746L413 757L407 757Z" fill="#2e8b3a" />
        <path d="M418 781L443 775" stroke="#d8a0a0" strokeWidth="1.500" />
        <path d="M451 775L441 772L442 778Z" fill="#d83030" />
        <path d="M417 782L428 777" stroke="#1c3ad8" strokeWidth="2" />
        <circle cx="417" cy="783" r="3" fill="#a8a8a8" />
        <text x="404" y="747" fontSize="11" fill="#4aa34a" fontFamily="Noto Sans">Y</text>
        <text x="451" y="777" fontSize="11" fill="#d83a34" fontFamily="Noto Sans">X</text>
        <text x="421" y="786" fontSize="10" fill="#3a4ce0" fontFamily="Noto Sans">Z</text>
      </g>
    </svg>
  );
}

function SectionChevron() {
  return (
    <svg width="11" height="9" viewBox="0 0 11 9" className="-mr-[3px]">
      <path d="M1 7.500l4.500-6 4.500 6" fill="none" stroke="#0f6d92" strokeWidth="2" />
    </svg>
  );
}

function Dialog() {
  return (
    <div className="absolute right-0 top-[21px] flex h-[252px] w-[328px] flex-col border-b border-l border-[#a6a6a6] bg-[#dcdcdc]">
      <div className="flex h-[26px] shrink-0 items-center bg-[#5a9fba] pl-[6px] pr-[9px] pt-[3px] text-[13px] text-white">
        <svg width="14" height="14" viewBox="0 0 14 14">
          <circle cx="7" cy="7" r="3.800" fill="none" stroke="#fff" strokeWidth="2.400" />
          <circle cx="7" cy="7" r="6" fill="none" stroke="#fff" strokeWidth="1.800" strokeDasharray="2.500 2.200" />
        </svg>
        <span className="ml-[7px] tracking-[0.1px]">测量体（即将失效）</span>
        <svg width="13" height="13" viewBox="0 0 13 13" className="ml-auto">
          <path d="M3.500 2.500a5 5 0 1 0 5 0" fill="none" stroke="#fff" strokeWidth="1.700" />
          <path d="M1 1h4v4z" fill="#fff" />
        </svg>
        <svg width="12" height="12" viewBox="0 0 12 12" className="ml-[7px]">
          <path d="M1 1l10 10M11 1L1 11" stroke="#fff" strokeWidth="2" />
        </svg>
      </div>
      <div className="ml-[5px] mr-[6px] mt-[4px] h-[71px] shrink-0 border-b-2 border-[#9c9c9c] bg-[#f0f0f0] px-[9px]">
        <div className="flex h-[25px] items-center justify-between text-[14px] text-[#1776a0]">
          <span className="-ml-[2px]">对象</span>
          <SectionChevron />
        </div>
        <div className="mt-[5px] flex h-[32px] gap-[2px] text-[12px]">
          <div className="flex flex-1 items-center gap-[5px] bg-[#ffdf79] pl-[2px]">
            <Check size={13} />
            选择体 (1)
          </div>
          <div className="flex w-[32px] items-center justify-center bg-[#ffdf79]">
            <svg width="22" height="23" viewBox="0 0 22 23">
              <path d="M11 1l10 5v11l-10 5-10-5V6z" fill="#f9a21c" stroke="#e4411c" />
              <path d="M1 6l10 5 10-5-10-5z" fill="#ffd24a" stroke="#e4411c" />
              <path d="M11 11v11" stroke="#e4411c" />
            </svg>
          </div>
        </div>
      </div>
      <div className="ml-[5px] mr-[6px] mt-[3px] h-[87px] shrink-0 border-b-2 border-[#9c9c9c] bg-[#f0f0f0] px-[9px]">
        <div className="flex h-[25px] items-center justify-between text-[14px] text-[#1776a0]">
          <span className="-ml-[2px]">关联测量和检查</span>
          <SectionChevron />
        </div>
        <div className="mt-[8px] flex h-[14px] items-center gap-[5px] text-[12px]">
          <div className="h-[13px] w-[13px] border border-[#333] bg-white" />
          关联
        </div>
        <div className="mt-[6px] flex items-center justify-between text-[12px] text-[#999]">
          需求
          <div className="flex h-[25px] w-[141px] items-center justify-between border border-[#c0c0c0] bg-[#fafafa] pl-[4px] pr-[6px]">
            无
            <Caret className="opacity-50" />
          </div>
        </div>
      </div>
      <div className="ml-[5px] mr-[6px] flex h-[16px] shrink-0 items-center justify-center border-b border-[#e4e4e4]">
        <Caret className="mt-[4px]" />
      </div>
      <div className="mt-[8px] flex justify-end gap-[5px] pr-[16px] text-[12px]">
        <div className="flex h-[25px] w-[54px] items-center justify-center bg-[#74b1c8] text-white">确定</div>
        <div className="flex h-[25px] w-[54px] items-center justify-center border border-[#8a8a8a]">应用</div>
        <div className="flex h-[25px] w-[54px] items-center justify-center border border-[#8a8a8a]">取消</div>
      </div>
    </div>
  );
}

function Viewport() {
  return (
    <div className="flex min-w-0 flex-1 flex-col">
      <div className="flex h-[21px] shrink-0 bg-[#f0f0f0]">
        <div className="flex w-[136px] items-center bg-[#5a9fba] pl-[6px] text-[12px] text-white">
          <svg width="14" height="14" viewBox="0 0 14 14">
            <path d="M2 4l5-3 5 2v7l-6 3-4-2z" fill="#2c55d8" stroke="#e8f0ff" strokeWidth=".8" />
            <path d="M6 7l4-2v4l-4 2z" fill="#e8f0ff" />
          </svg>
          <span className="ml-[6px] tracking-[0.1px]">练习2313.prt</span>
          <svg width="11" height="12" viewBox="0 0 11 12" className="ml-[6px]">
            <path d="M1 1h6l3 3v7H1z" fill="none" stroke="#fff" strokeWidth="1.500" />
            <path d="M5 8l5-5" stroke="#fff" />
          </svg>
          <svg width="9" height="9" viewBox="0 0 9 9" className="ml-[6px]">
            <path d="M1 1l7 7M8 1L1 8" stroke="#bcc8ce" strokeWidth="1.800" />
          </svg>
        </div>
      </div>
      <div className="relative min-h-0 flex-1 bg-[linear-gradient(180deg,#b4b5b6_0%,#c9cacc_30%,#e3e4e6_75%,#e8e9ea_100%)]">
        <Model />
        <div className="absolute left-[315px] top-[244px] flex h-[30px] w-[205px] items-center border border-[#b5b5b5] bg-[#f0f0f0] pl-[3px] text-[12px]">
          <div className="h-[22px] w-[6px] bg-[radial-gradient(#b0b0b0_1px,transparent_1.2px)] bg-[length:3px_4px]" />
          <div className="ml-[8px] flex h-[22px] w-[74px] items-center justify-between border border-[#a8a8a8] bg-white pl-[4px] pr-[5px]">
            体积
            <Caret />
          </div>
          <span className="ml-[4px] whitespace-nowrap text-[#222] tracking-[0.1px]">=48063.4357 mm³</span>
        </div>
      </div>
    </div>
  );
}

function StatusBar() {
  return (
    <div className="flex h-[22px] shrink-0 items-center border-t border-[#a9a9a9] bg-[#f0f0f0] pl-[3px] text-[11px] font-medium text-[#222]">
      <span className="w-[663px]">选择要测量质量属性的体</span>
      <span>实体 已选定</span>
      <div className="ml-[625px] h-[15px] w-[15px] bg-[#c4c4c4]">
        <svg width="15" height="15" viewBox="0 0 15 15">
          <path d="M3 3l9 1-2 8-7-1z" fill="#e0e0e0" stroke="#f4f4f4" strokeDasharray="2 1" />
          <path d="M5 5l5 1M5 8l4 1M7 3v8" stroke="#999" strokeDasharray="1 1" />
        </svg>
      </div>
      <svg width="15" height="15" viewBox="0 0 15 15" className="ml-[6px]">
        <path d="M1 4V1h3M11 1h3v3M14 11v3h-3M4 14H1v-3" fill="none" stroke="#777" />
        <rect x="3.500" y="3.500" width="8" height="8" fill="#2a73c8" stroke="#333" />
      </svg>
    </div>
  );
}

const taskIcons: { node: ReactNode; on?: boolean; active?: boolean }[] = [
  {
    node: (
      <svg width="17" height="17" viewBox="0 0 17 17">
        <path d="M0 2.500l7-1V8H0zM8 1.300l9-1.300V8H8zM0 9h7v6.500l-7-1zM8 9h9v8l-9-1.300z" fill="#fff" />
      </svg>
    ),
  },
  {
    node: (
      <svg width="16" height="16" viewBox="0 0 16 16">
        <path d="M1 1h9M1 15h9M2 5h8v6H2zM13 1h2v3h-2zM13 6h2v3h-2zM13 11h2v3h-2" fill="none" stroke="#fff" strokeWidth="1.200" />
      </svg>
    ),
  },
  {
    node: (
      <svg width="24" height="24" viewBox="0 0 24 24">
        <rect width="24" height="24" rx="5" fill="#fff" />
        <path d="M6 4l14 8-14 8z" fill="#22b0f0" />
        <path d="M6 4l9 8-9 8z" fill="#f7c51e" />
        <path d="M8 8l6 4-6 4z" fill="#4bc24a" />
      </svg>
    ),
  },
  {
    on: true,
    node: (
      <svg width="22" height="22" viewBox="0 0 22 22">
        <path d="M0 1h9l1 2h12v18H0z" fill="#f7cf5a" />
        <path d="M0 3h9v3H0z" fill="#e8a722" />
        <path d="M7 13h8v8H7z" fill="#2f8fdb" />
        <path d="M9 16h4v5H9z" fill="#f7cf5a" />
      </svg>
    ),
  },
  {
    node: (
      <svg width="22" height="24" viewBox="0 0 22 24">
        <path d="M1 6h20l-1 17a1 1 0 0 1-1 1H3a1 1 0 0 1-1-1z" fill="#f4f4f4" />
        <path d="M7 6V3a2 2 0 0 1 2-2h4a2 2 0 0 1 2 2v3" fill="none" stroke="#1aa5d8" strokeWidth="1.500" />
        <rect x="6" y="10" width="4.500" height="4.500" fill="#f25022" />
        <rect x="11.500" y="10" width="4.500" height="4.500" fill="#7fba00" />
        <rect x="6" y="15.500" width="4.500" height="4.500" fill="#00a4ef" />
        <rect x="11.500" y="15.500" width="4.500" height="4.500" fill="#ffb900" />
      </svg>
    ),
  },
  {
    node: (
      <svg width="24" height="22" viewBox="0 0 24 22">
        <path d="M0 8L12 0l12 8v14H0z" fill="#27a4ea" />
        <path d="M0 8l12 8 12-8-12-8z" fill="#0c6db8" />
        <path d="M0 22l12-9 12 9z" fill="#7fd0f6" />
      </svg>
    ),
  },
  {
    node: (
      <svg width="24" height="25" viewBox="0 0 24 25">
        <circle cx="12" cy="14" r="11" fill="#f4762a" />
        <path d="M4 7C6 2 10 3 11 0c5 3 11 7 11 14a11 11 0 0 1-3 7C22 12 15 6 12 8 8 8 4 12 4 7z" fill="#fcb51c" />
        <circle cx="12" cy="15" r="5.500" fill="#7a3fc4" />
      </svg>
    ),
  },
  {
    node: (
      <svg width="25" height="25" viewBox="0 0 25 25">
        <circle cx="12.500" cy="12.500" r="12" fill="#1a78c8" />
        <path d="M1 11C3 3 13-1 20 3s5 12 1 12c-3 0-2-3-5-5S6 8 1 11z" fill="#3bd07c" />
        <path d="M9 14c0 5 6 8 12 6-4 5-12 5-15-1-1-3 1-6 3-5z" fill="#0f5fa8" />
      </svg>
    ),
  },
  {
    node: (
      <svg width="24" height="24" viewBox="0 0 24 24">
        <rect width="24" height="24" rx="4" fill="#3b82f0" />
        <path d="M4 6c5 1 8 3 9 5l6-7-2 9c0 4-3 7-5 8 0-4-1-6-3-7l3-3C9 11 6 9 4 6z" fill="#fff" />
      </svg>
    ),
  },
  {
    node: (
      <svg width="24" height="24" viewBox="0 0 24 24">
        <rect width="24" height="24" rx="5" fill="#3a8ff0" />
        <path d="M12 4l7 3v6c0 4-3 6-7 8-4-2-7-4-7-8V7z" fill="none" stroke="#fff" strokeWidth="1.800" />
        <path d="M9 12c1 2 5 2 6 0" fill="none" stroke="#fff" strokeWidth="1.500" />
      </svg>
    ),
  },
  {
    on: true,
    node: (
      <svg width="22" height="24" viewBox="0 0 22 24">
        <rect width="22" height="24" rx="2" fill="#1d7fd0" />
        <path d="M0 24L9 8l5 7 3-3 5 8v4z" fill="#3cc0e8" />
        <circle cx="14" cy="6" r="2.500" fill="#fff" />
      </svg>
    ),
  },
  {
    on: true,
    node: (
      <svg width="24" height="24" viewBox="0 0 24 24">
        <path d="M3 3l16-3 3 15-16 3z" fill="#dfe6ee" stroke="#8c9aa8" />
        <path d="M6 12l3-5 2 6 2-8 2 7 3-2" fill="none" stroke="#3a7fc8" />
        <path d="M8 18h8l2 5H6z" fill="#9ea8b2" />
      </svg>
    ),
  },
  {
    on: true,
    node: (
      <svg width="26" height="26" viewBox="0 0 26 26">
        <ellipse cx="13" cy="14" rx="9" ry="11" fill="#1f8fdc" />
        <path d="M6 4h10l-5 10z" fill="#e0283a" />
        <path d="M1 24c8 0 18-6 24-18-2 10-12 19-24 18z" fill="#f0b81c" />
      </svg>
    ),
  },
  {
    on: true,
    active: true,
    node: (
      <svg width="20" height="26" viewBox="0 0 20 26">
        <path d="M9 1c6 0 10 6 9 12-1 3-3 5-6 6 3-4 3-13-3-18z" fill="#c8401a" />
        <path d="M9 1l1 15" stroke="#e8e8e8" strokeWidth="2" />
        <circle cx="5" cy="21" r="3.500" fill="none" stroke="#2a88d8" strokeWidth="2" />
        <circle cx="13" cy="23" r="2.500" fill="none" stroke="#2a88d8" strokeWidth="2" />
      </svg>
    ),
  },
];

function Taskbar() {
  return (
    <div className="relative flex h-[40px] shrink-0 items-stretch overflow-hidden bg-gradient-to-r from-[#233a44] via-[#203640] to-[#1a2c42] text-white">
      {taskIcons.map((t, i) => (
        <div
          key={i}
          className={`flex w-[49px] shrink-0 items-center justify-center ${t.active ? "bg-[#4c5f6b]" : ""} ${t.on ? "border-b-[2px] border-[#6ab0e8]" : ""}`}
        >
          {t.node}
        </div>
      ))}
      <div className="ml-[480px] flex items-center">
        <svg width="12" height="7" viewBox="0 0 12 7">
          <path d="M1 6l5-5 5 5" fill="none" stroke="#fff" />
        </svg>
        <svg width="16" height="16" viewBox="0 0 16 16" className="ml-[10px]">
          <path d="M4 1h11v11H4zM1 3h5v5H1zM8 12v3M5 15h7" fill="none" stroke="#fff" />
        </svg>
        <svg width="12" height="20" viewBox="0 0 12 20" className="ml-[9px]">
          <rect x="3" y="1" width="6" height="11" rx="3" fill="#fff" />
          <path d="M1 8c0 6 10 6 10 0M6 14v4M3 18h6" fill="none" stroke="#fff" />
        </svg>
        <svg width="16" height="14" viewBox="0 0 16 14" className="ml-[10px]">
          <path d="M1 5h3l4-4v12L4 9H1zM11 4c1.500 2 1.500 4 0 6M13 2c2.500 3 2.500 7 0 10" fill="none" stroke="#fff" />
        </svg>
        <span className="ml-[9px] text-[14px]">中</span>
        <div className="ml-[13px] flex h-[22px] w-[17px] items-center justify-center rounded-[3px] bg-[#1e7fe8] text-[13px] font-bold">Q</div>
        <div className="ml-[7px] flex w-[80px] flex-col items-center text-[12px] leading-[17px]">
          <span>19:06</span>
          <span>2021/10/31</span>
        </div>
        <svg width="16" height="16" viewBox="0 0 16 16" className="ml-[11px]">
          <path d="M1 1h14v11H9l-2 3v-3H1z" fill="none" stroke="#fff" />
        </svg>
      </div>
      <div className="absolute right-[5px] top-0 h-full w-px bg-[#46586a]" />
      <span className="absolute bottom-[3px] right-[2px] whitespace-nowrap text-[14px] tracking-[0.3px] text-[#d0d5da] opacity-85 [font-family:'Liberation_Serif','Noto_Sans_CJK_SC',serif]">
        UG爱好者论坛@NX小白白
      </span>
    </div>
  );
}

export default function App() {
  return (
    <div className={`flex h-[900px] w-[1440px] flex-col overflow-hidden bg-[#f0f0f0] text-[11px] text-[#222] ${font}`}>
      <TitleBar />
      <TabBar />
      <Ribbon />
      <Toolbar />
      <div className="flex h-[640px] min-h-0 shrink-0">
        <Rail />
        <Navigator />
        <div className="relative flex min-w-0 flex-1">
          <Viewport />
          <Dialog />
        </div>
      </div>
      <StatusBar />
      <Taskbar />
    </div>
  );
}
